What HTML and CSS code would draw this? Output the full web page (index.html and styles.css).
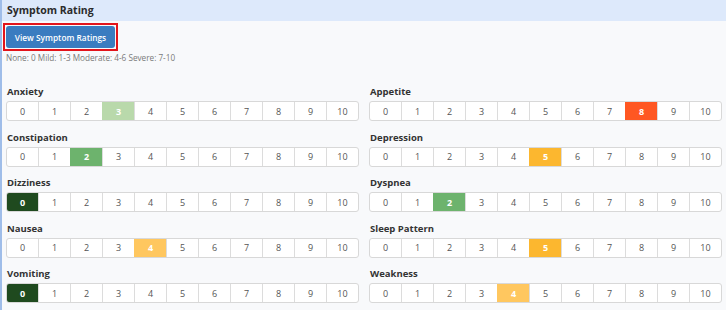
FILE: index.html
```html
<!DOCTYPE html>
<html>
<head>
    <title>Symptom Rating</title>
    <meta name="viewport" content="width=device-width, initial-scale=1.0">
    <link rel="stylesheet" href="styles.css">
</head>
<body>
    <div class="panel">
        <div class="panelHead">Symptom Rating</div>
        <div class="panelBody">
            <div class="btnWrap"><button class="viewBtn">View Symptom Ratings</button></div>
            <p class="legend">None: 0 Mild: 1-3 Moderate: 4-6 Severe: 7-10</p>

            <div class="ratings">
                <div class="rating">
                    <div class="label">Anxiety</div>
                    <div class="scale">
                        <span>0</span><span>1</span><span>2</span><span class="sel mild1">3</span><span>4</span><span>5</span><span>6</span><span>7</span><span>8</span><span>9</span><span>10</span>
                    </div>
                </div>
                <div class="rating">
                    <div class="label">Appetite</div>
                    <div class="scale">
                        <span>0</span><span>1</span><span>2</span><span>3</span><span>4</span><span>5</span><span>6</span><span>7</span><span class="sel severe">8</span><span>9</span><span>10</span>
                    </div>
                </div>
                <div class="rating">
                    <div class="label">Constipation</div>
                    <div class="scale">
                        <span>0</span><span>1</span><span class="sel mild2">2</span><span>3</span><span>4</span><span>5</span><span>6</span><span>7</span><span>8</span><span>9</span><span>10</span>
                    </div>
                </div>
                <div class="rating">
                    <div class="label">Depression</div>
                    <div class="scale">
                        <span>0</span><span>1</span><span>2</span><span>3</span><span>4</span><span class="sel mod5">5</span><span>6</span><span>7</span><span>8</span><span>9</span><span>10</span>
                    </div>
                </div>
                <div class="rating">
                    <div class="label">Dizziness</div>
                    <div class="scale">
                        <span class="sel none">0</span><span>1</span><span>2</span><span>3</span><span>4</span><span>5</span><span>6</span><span>7</span><span>8</span><span>9</span><span>10</span>
                    </div>
                </div>
                <div class="rating">
                    <div class="label">Dyspnea</div>
                    <div class="scale">
                        <span>0</span><span>1</span><span class="sel mild2">2</span><span>3</span><span>4</span><span>5</span><span>6</span><span>7</span><span>8</span><span>9</span><span>10</span>
                    </div>
                </div>
                <div class="rating">
                    <div class="label">Nausea</div>
                    <div class="scale">
                        <span>0</span><span>1</span><span>2</span><span>3</span><span class="sel mod4">4</span><span>5</span><span>6</span><span>7</span><span>8</span><span>9</span><span>10</span>
                    </div>
                </div>
                <div class="rating">
                    <div class="label">Sleep Pattern</div>
                    <div class="scale">
                        <span>0</span><span>1</span><span>2</span><span>3</span><span>4</span><span class="sel mod5">5</span><span>6</span><span>7</span><span>8</span><span>9</span><span>10</span>
                    </div>
                </div>
                <div class="rating">
                    <div class="label">Vomiting</div>
                    <div class="scale">
                        <span class="sel none">0</span><span>1</span><span>2</span><span>3</span><span>4</span><span>5</span><span>6</span><span>7</span><span>8</span><span>9</span><span>10</span>
                    </div>
                </div>
                <div class="rating">
                    <div class="label">Weakness</div>
                    <div class="scale">
                        <span>0</span><span>1</span><span>2</span><span>3</span><span class="sel mod4">4</span><span>5</span><span>6</span><span>7</span><span>8</span><span>9</span><span>10</span>
                    </div>
                </div>
            </div>
        </div>
    </div>
</body>
</html>
```

FILE: styles.css
```css
*{
    margin:0;
    padding:0;
    box-sizing:border-box;
}

body{
    font-family:"Open Sans", "Liberation Sans", sans-serif;
    background-color:#f8f9fb;
    color:#333;
}

.panel{
    height:310px;
    border-left:2px solid #9fbde9;
    background-color:#f8f9fb;
}

.panelHead{
    height:21px;
    line-height:20px;
    padding-left:5px;
    background-color:#dde9fb;
    font-size:10.5px;
    font-weight:bold;
    color:#2b2b2b;
}

.panelBody{
    padding:2px 4px 0 4px;
}

.btnWrap{
    display:inline-block;
    margin-left:-3px;
    border:2px solid #e3141b;
    padding:1px;
}

.viewBtn{
    display:block;
    width:109px;
    height:22px;
    border:none;
    border-radius:3px;
    background-color:#3a7cc0;
    color:white;
    font-family:inherit;
    font-size:8.3px;
    font-weight:600;
}

.legend{
    margin-top:1px;
    font-size:8.2px;
    line-height:12px;
    color:#7a7a7a;
}

.ratings{
    display:grid;
    grid-template-columns:1fr 1fr;
    column-gap:10px;
    row-gap:9.5px;
    margin-top:21px;
}

.label{
    font-size:9.5px;
    font-weight:bold;
    line-height:14px;
    color:#333;
    padding-left:1px;
    margin-bottom:2px;
}

.scale{
    display:flex;
    height:20px;
    border:1px solid #d8d8d8;
    border-radius:3px;
    background-color:white;
    overflow:hidden;
}

.scale span{
    flex:1;
    display:flex;
    align-items:center;
    justify-content:center;
    border-left:1px solid #dcdcdc;
    font-size:9px;
    color:#555;
}

.scale span:first-child{
    border-left:none;
}

.scale .sel{
    color:white;
    font-weight:bold;
    border-left-color:transparent;
}

.none{ background-color:#1f4a1f; }
.mild1{ background-color:#b9d9ab; }
.mild2{ background-color:#6db36d; }
.mod4{ background-color:#ffc75f; }
.mod5{ background-color:#fcb72f; }
.severe{ background-color:#ff5722; }
```
